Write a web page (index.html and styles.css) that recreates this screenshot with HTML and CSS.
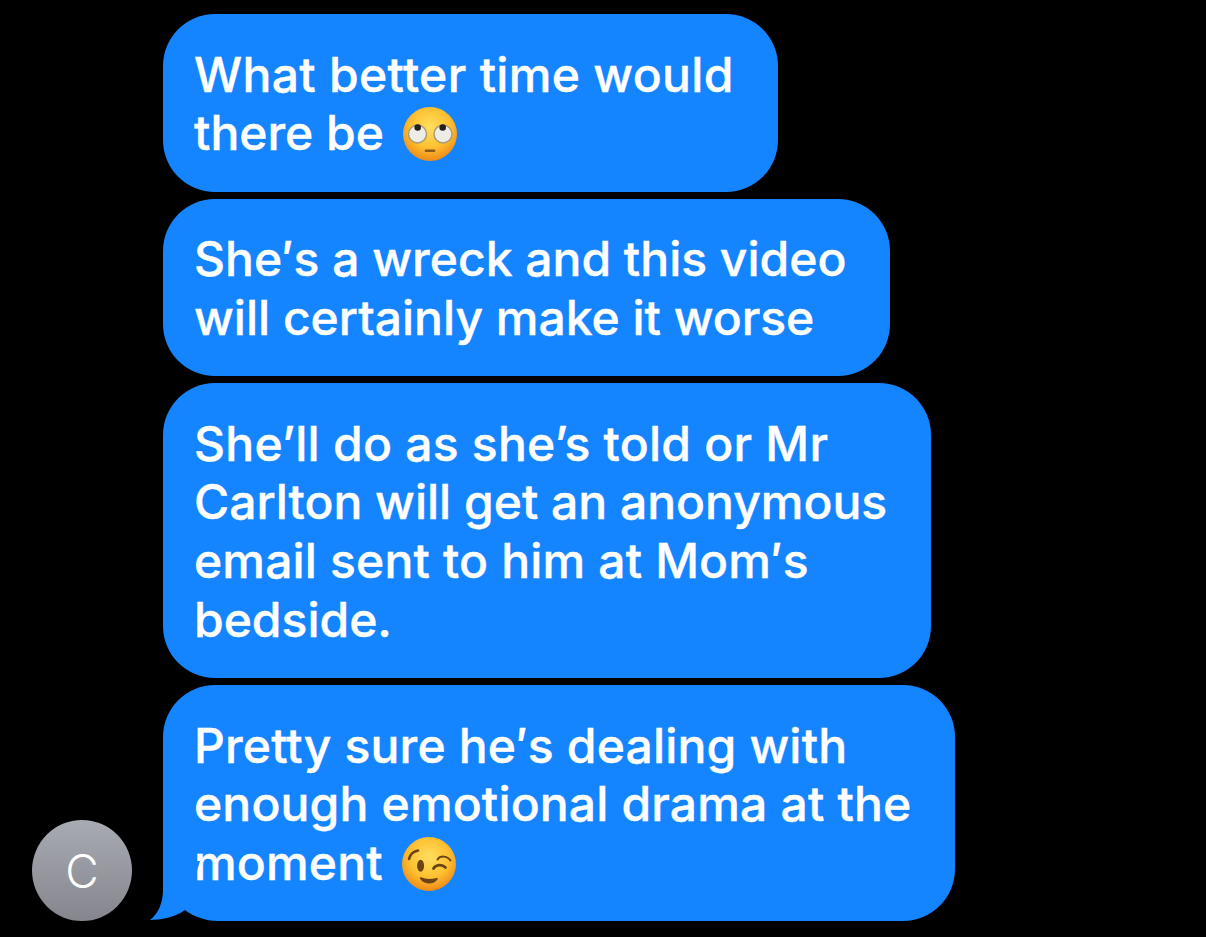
FILE: index.html
```html
<!DOCTYPE html>
<html lang="en">
<head>
<meta charset="utf-8">
<title>Messages</title>
<link rel="stylesheet" href="styles.css">
</head>
<body>
<svg class="defs" width="0" height="0" aria-hidden="true">
  <defs>
    <radialGradient id="face" cx="50%" cy="38%" r="62%">
      <stop offset="0" stop-color="#ffdf5e"/>
      <stop offset="0.6" stop-color="#fdc031"/>
      <stop offset="1" stop-color="#ef8a17"/>
    </radialGradient>
  </defs>
</svg>
<main class="thread">
  <div class="avatar-col">
    <div class="avatar">C</div>
  </div>
  <div class="bubbles">
    <div class="bubble"><span class="track-lg">What better time would</span><br>there be <svg class="emoji" viewBox="0 0 56 56" role="img" aria-label="🙄">
        <circle cx="28" cy="28" r="27" fill="url(#face)"/>
        <circle cx="15.500" cy="28" r="9" fill="#eeece6" stroke="#a89a72" stroke-width="1.400"/>
        <circle cx="41" cy="28" r="9" fill="#eeece6" stroke="#a89a72" stroke-width="1.400"/>
        <circle cx="15.700" cy="21.500" r="3.300" fill="#26201c"/>
        <circle cx="40.700" cy="21.500" r="3.300" fill="#26201c"/>
        <rect x="22.700" y="43.400" width="10.700" height="2.600" rx="1.300" fill="#8a5a1c"/>
      </svg></div>
    <div class="bubble">She′s a wreck and this video<br>will certainly make it worse</div>
    <div class="bubble"><span class="track-md">She’ll do as she’s told or Mr</span><br>Carlton will get an anonymous<br><span class="track-sm">email sent to him at Mom′s</span><br>bedside.</div>
    <div class="bubble bubble-tail track-sm">Pretty sure he′s dealing with<br>enough emotional drama at the<br>moment <svg class="emoji" viewBox="0 0 56 56" role="img" aria-label="😉">
        <circle cx="28" cy="28" r="27" fill="url(#face)"/>
        <path d="M8 23C9 18.500 12 15.500 17 14.500" fill="none" stroke="#6b4415" stroke-width="2.600" stroke-linecap="round"/>
        <path d="M36.500 23.500C39 19.500 46 19.500 49.500 24.500" fill="none" stroke="#6b4415" stroke-width="2" stroke-linecap="round"/>
        <ellipse cx="19.600" cy="29.700" rx="3.500" ry="6" fill="#6b4415"/>
        <path d="M32.500 32.500C35 28.500 41 28 44.500 31.500" fill="none" stroke="#6b4415" stroke-width="2.800" stroke-linecap="round"/>
        <path d="M19.600 42C23 47.500 32 48.500 36 42.700C31 44 24 44 19.600 42Z" fill="#6b4415" stroke="#6b4415" stroke-width="1.600" stroke-linejoin="round"/>
      </svg>
      <svg class="tail" viewBox="0 0 50 60" aria-hidden="true"><path d="M13 0V29C13 42 8 53 0 59C10 59 26 56 35 49L50 0Z" fill="#1585ff"/></svg>
    </div>
  </div>
</main>
</body>
</html>
```

FILE: styles.css
```css
* {
  box-sizing: border-box;
}

html,
body {
  margin: 0;
  height: 100%;
  background: #000;
}

.defs {
  position: absolute;
}

.thread {
  display: flex;
  align-items: flex-end;
  gap: 31px;
  padding: 14px 0 16px 32px;
  font-family: Inter, "Liberation Sans", sans-serif;
}

.avatar-col {
  flex: none;
}

.avatar {
  display: flex;
  align-items: center;
  justify-content: center;
  width: 100px;
  height: 101px;
  border-radius: 50%;
  background: linear-gradient(#a9abb3, #84858d);
  color: #fff;
  font-size: 46px;
  font-weight: 300;
}

.bubbles {
  display: flex;
  flex-direction: column;
  align-items: flex-start;
  gap: 7px;
}

.bubble {
  position: relative;
  padding: 31.500px 44px 28.500px 31px;
  border-radius: 52px;
  background: #1585ff;
  color: #fff;
  font-size: 48px;
  font-weight: 500;
  line-height: 58.750px;
  white-space: nowrap;
  -webkit-text-stroke: 0.4px #fff;
}

.bubble-tail {
  border-bottom-left-radius: 55px;
}

.track-lg {
  letter-spacing: 0.33px;
}

.track-md {
  letter-spacing: 0.25px;
}

.track-sm {
  letter-spacing: 0.17px;
}

.emoji {
  display: inline-block;
  width: 56px;
  height: 56px;
  margin: -8px 0 -8px 5px;
  vertical-align: -3.500px;
}

.tail {
  position: absolute;
  left: -13px;
  bottom: 0;
  width: 50px;
  height: 60px;
}
```
